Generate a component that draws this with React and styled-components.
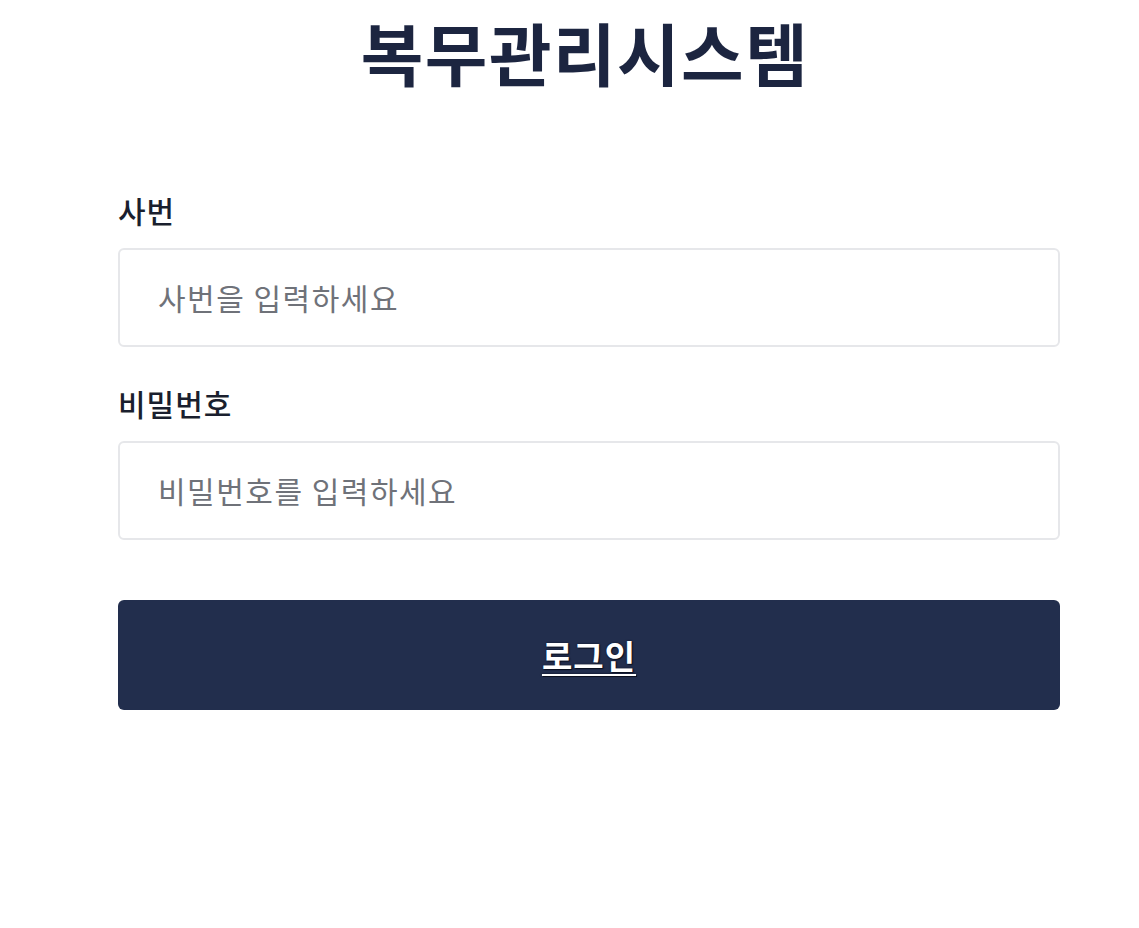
import React from 'react';
import styled, { createGlobalStyle } from 'styled-components';

const GlobalStyle = createGlobalStyle`
    html, body {
        margin: 0;
        padding: 0;
        background: #ffffff;
        font-family: "Noto Sans CJK KR", "Noto Sans", sans-serif;
    }
`;

export default function App() {
    return (
        <>
            <GlobalStyle />
            <Page>
                <Title>복무관리시스템</Title>
                <Form onSubmit={(e) => e.preventDefault()}>
                    <Field>
                        <Label htmlFor="emp-no">사번</Label>
                        <Input id="emp-no" type="text" placeholder="사번을 입력하세요" />
                    </Field>
                    <Field>
                        <Label htmlFor="password">비밀번호</Label>
                        <Input id="password" type="password" placeholder="비밀번호를 입력하세요" />
                    </Field>
                    <Button type="submit"><span>로그인</span></Button>
                </Form>
            </Page>
        </>
    );
}

const Page = styled.main`
    width: 942px;
    margin-left: 118px;
    padding-top: 11px;
    display: flex;
    flex-direction: column;
`;

const Title = styled.h1`
    margin: 0;
    text-align: center;
    font-size: 68px;
    line-height: 1.2;
    font-weight: 700;
    color: #1c2540;
    letter-spacing: 1.5px;
    padding-right: 8px;
`;

const Form = styled.form`
    margin-top: 97px;
    display: flex;
    flex-direction: column;
`;

const Field = styled.div`
    display: flex;
    flex-direction: column;
    margin-bottom: 36px;
`;

const Label = styled.label`
    font-size: 30px;
    line-height: 40px;
    font-weight: 500;
    color: #1a1f2e;
    letter-spacing: 1px;
    margin-bottom: 18px;
`;

const Input = styled.input`
    box-sizing: border-box;
    width: 100%;
    height: 99px;
    padding: 0 38px;
    border: 2px solid #e6e7ea;
    border-radius: 6px;
    background: #ffffff;
    font-family: inherit;
    font-size: 30px;
    letter-spacing: 1.5px;
    color: #1a1f2e;
    outline: none;

    &::placeholder {
        color: #6f7279;
    }
`;

const Button = styled.button`
    margin-top: 24px;
    height: 110px;
    border: none;
    border-radius: 6px;
    background: #222e4d;
    cursor: pointer;
    display: flex;
    align-items: center;
    justify-content: center;

    span {
        font-family: "Noto Sans CJK KR", sans-serif;
        font-size: 33px;
        font-weight: 700;
        letter-spacing: 1px;
        color: #ffffff;
        text-decoration: underline;
        text-underline-offset: 5px;
        text-decoration-thickness: 2px;
        text-shadow: 0 0 2px #0b1020, 1px 1px 1px #0b1020;
    }
`;
